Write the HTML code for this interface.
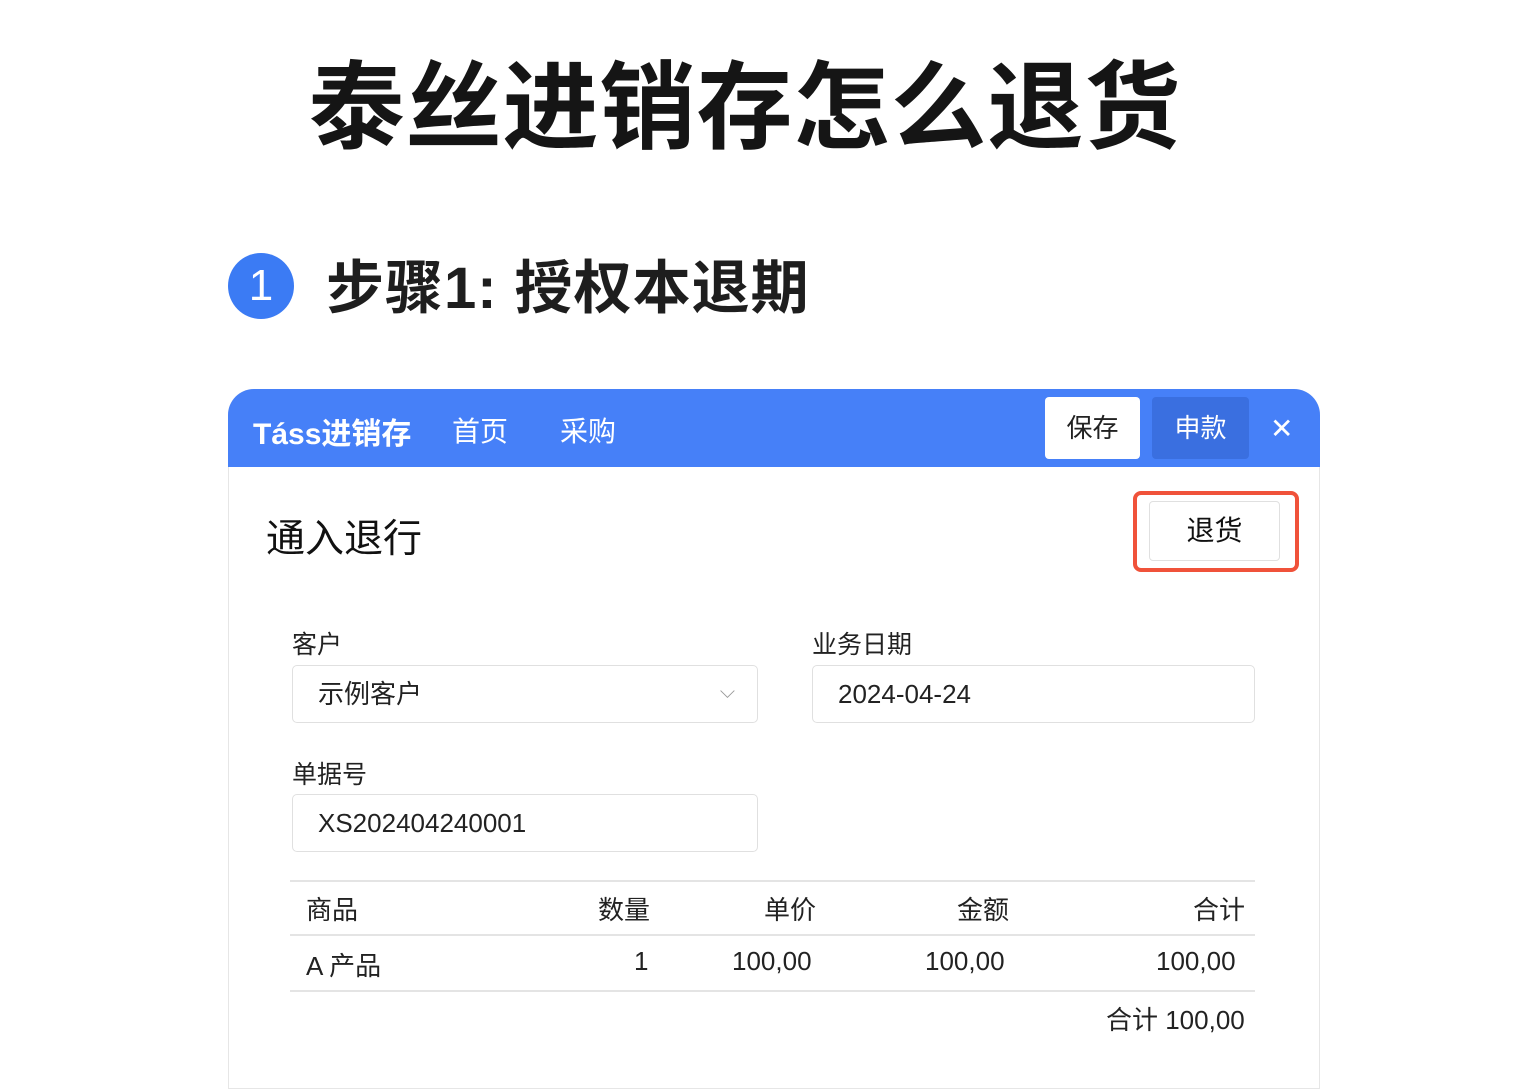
<!DOCTYPE html>
<html><head><meta charset="utf-8"><style>
*{margin:0;padding:0;box-sizing:border-box}
body{width:1536px;height:1024px;background:#fff;position:relative;overflow:hidden;font-family:"Liberation Sans","Noto Sans CJK SC",sans-serif;color:#1a1a1a}
.a{position:absolute;white-space:nowrap}
.title{left:0;width:1490px;text-align:center;top:30px;font-size:96px;font-weight:bold;letter-spacing:1px;color:#151515}
.circ{left:228px;top:253px;width:66px;height:66px;border-radius:50%;background:#3b7bf4;color:#fff;font-size:44px;text-align:center;line-height:66px}
.step{left:326px;top:241px;font-size:58px;font-weight:bold;color:#1e1e1e;letter-spacing:1px}
.card{left:228px;top:389px;width:1092px;height:700px;border:1px solid #e6e6e6;border-radius:26px 26px 0 0;background:#fff}
.hdr{left:228px;top:389px;width:1092px;height:78px;background:#4680f8;border-radius:26px 26px 0 0}
.hw{color:#fff;font-size:28px;top:410px}
.btn{top:397px;height:62px;border-radius:4px;font-size:26px;text-align:center;line-height:62px}
.lbl{font-size:25px;color:#222}
.inp{height:58px;border:1px solid #e0e0e0;border-radius:5px;font-size:26px;line-height:56px;padding-left:25px;color:#222}
.line{height:2px;background:#e4e4e4}
.td{font-size:26px;color:#222}
</style></head><body>
<div class="a title">泰丝进销存怎么退货</div>
<div class="a circ">1</div>
<div class="a step">步骤1: 授权本退期</div>
<div class="a card"></div>
<div class="a hdr"></div>
<div class="a hw" style="left:253px;font-weight:bold;font-size:30px;top:409px">Táss进销存</div>
<div class="a hw" style="left:452px">首页</div>
<div class="a hw" style="left:560px">采购</div>
<div class="a btn" style="left:1045px;width:95px;background:#fff;color:#222">保存</div>
<div class="a btn" style="left:1152px;width:97px;background:#3a6fe0;color:#fff">申款</div>
<div class="a hw" style="left:1270px;top:412px;font-size:28px">✕</div>
<div class="a" style="left:266px;top:508px;font-size:39px;color:#111">通入退行</div>
<div class="a" style="left:1133px;top:491px;width:166px;height:81px;border:4px solid #f0523a;border-radius:8px"></div>
<div class="a" style="left:1149px;top:501px;width:131px;height:60px;border:1px solid #e0e0e0;border-radius:4px;font-size:28px;text-align:center;line-height:58px;color:#111">退货</div>
<div class="a lbl" style="left:292px;top:625px">客户</div>
<div class="a lbl" style="left:812px;top:625px">业务日期</div>
<div class="a inp" style="left:292px;top:665px;width:466px">示例客户<span style="position:absolute;right:22px;top:-2px;color:#999;font-size:20px">⌵</span></div>
<div class="a inp" style="left:812px;top:665px;width:443px">2024-04-24</div>
<div class="a lbl" style="left:292px;top:755px">单据号</div>
<div class="a inp" style="left:292px;top:794px;width:466px">XS202404240001</div>
<div class="a line" style="left:290px;top:880px;width:965px"></div>
<div class="a td" style="left:306px;top:890px">商品</div>
<div class="a td" style="left:598px;top:890px">数量</div>
<div class="a td" style="left:764px;top:890px">单价</div>
<div class="a td" style="left:957px;top:890px">金额</div>
<div class="a td" style="left:1193px;top:890px">合计</div>
<div class="a line" style="left:290px;top:934px;width:965px"></div>
<div class="a td" style="left:306px;top:946px">A 产品</div>
<div class="a td" style="left:634px;top:946px">1</div>
<div class="a td" style="left:732px;top:946px">100,00</div>
<div class="a td" style="left:925px;top:946px">100,00</div>
<div class="a td" style="left:1156px;top:946px">100,00</div>
<div class="a line" style="left:290px;top:990px;width:965px"></div>
<div class="a td" style="left:1106px;top:1000px">合计 100,00</div>
</body></html>
